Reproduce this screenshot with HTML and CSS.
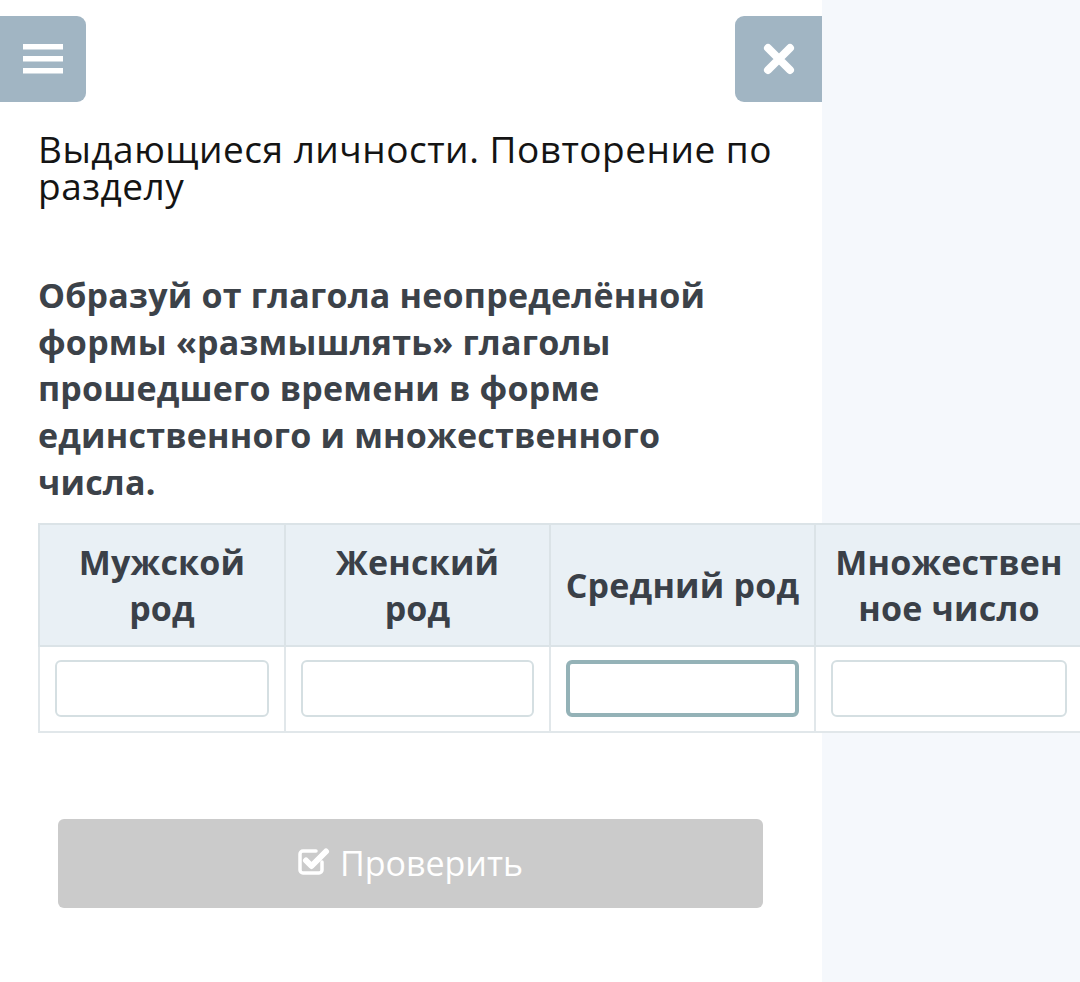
FILE: index.html
```html
<!DOCTYPE html>
<html lang="ru">
<head>
<meta charset="utf-8">
<link rel="stylesheet" href="styles.css">
</head>
<body>
<div class="panel">
  <div class="topbar">
    <div class="btn-menu">
      <svg width="40" height="30" viewBox="0 0 40 30"><rect x="0" y="0" width="40" height="5.5" fill="#fff"/><rect x="0" y="12" width="40" height="5.5" fill="#fff"/><rect x="0" y="24" width="40" height="5.5" fill="#fff"/></svg>
    </div>
    <div class="btn-close">
      <svg width="34" height="34" viewBox="0 0 34 34"><path d="M6 6 L28 28 M28 6 L6 28" stroke="#fff" stroke-width="8" stroke-linecap="round"/></svg>
    </div>
  </div>
  <h1 class="title">Выдающиеся личности. Повторение по разделу</h1>
  <p class="question">Образуй от глагола неопределённой формы «размышлять» глаголы прошедшего времени в форме единственного и множественного числа.</p>
  <table class="grid">
    <tr class="head">
      <th class="c1">Мужской род</th>
      <th class="c2">Женский род</th>
      <th class="c3">Средний род</th>
      <th class="c4">Множественное число</th>
    </tr>
    <tr class="body">
      <td><div class="inp"></div></td>
      <td><div class="inp"></div></td>
      <td><div class="inp focus"></div></td>
      <td><div class="inp"></div></td>
    </tr>
  </table>
  <div class="check-wrap">
    <div class="check-btn">
      <svg class="check-icon" width="32" height="29" viewBox="0 0 32 29"><path d="M24 15 V23 a3 3 0 0 1 -3 3 H5 a3 3 0 0 1 -3 -3 V7 a3 3 0 0 1 3 -3 H18" fill="none" stroke="#fff" stroke-width="3.5" stroke-linecap="round"/><path d="M8 13.5 L13.5 19 L28 4.5" fill="none" stroke="#fff" stroke-width="6" stroke-linecap="round" stroke-linejoin="round"/></svg>
      <span>Проверить</span>
    </div>
  </div>
</div>
</body>
</html>
```
FILE: styles.css
```css
html, body {
  margin: 0;
  padding: 0;
}
body {
  width: 1080px;
  height: 982px;
  background: #f5f8fc;
  font-family: "Open Sans", "Noto Sans", sans-serif;
  overflow: hidden;
}
.panel {
  width: 822px;
  height: 982px;
  background: #ffffff;
  box-sizing: border-box;
  padding-top: 16px;
}
.topbar {
  display: flex;
  justify-content: space-between;
}
.btn-menu {
  width: 86px;
  height: 86px;
  background: #a1b5c3;
  border-radius: 0 9px 9px 0;
  display: flex;
  align-items: center;
  justify-content: center;
}
.btn-close {
  width: 87px;
  height: 86px;
  background: #a1b5c3;
  border-radius: 9px 0 0 9px;
  display: flex;
  align-items: center;
  justify-content: center;
}
.title {
  margin: 28px 0 0 38px;
  font-weight: 400;
  font-size: 37px;
  line-height: 37px;
  letter-spacing: 0.5px;
  color: #141414;
  width: 770px;
}
.question {
  margin: 68px 0 0 38px;
  font-weight: 700;
  font-size: 34px;
  line-height: 46.7px;
  letter-spacing: 0.2px;
  color: #3c4249;
  width: 740px;
}
.grid {
  margin: 17px 0 0 38px;
  border-collapse: collapse;
  width: 1044px;
  table-layout: fixed;
}
.grid th {
  background: #e9f0f5;
  border: 2px solid #dbe3e7;
  font-weight: 700;
  font-size: 34px;
  line-height: 46px;
  letter-spacing: 0.2px;
  color: #3a4048;
  height: 122px;
  padding: 0 16px;
  box-sizing: border-box;
  text-align: center;
  vertical-align: middle;
  overflow-wrap: anywhere;
}
.grid .c1 { width: 246px; }
.grid .c2 { width: 265px; }
.grid .c3 { width: 265px; padding: 0 6px; }
.grid .c4 { width: 268px; }
.grid td {
  border: 2px solid #e1e7ea;
  background: #fff;
  height: 86px;
  padding: 0 15px;
  box-sizing: border-box;
  vertical-align: middle;
}
.inp {
  height: 57px;
  border: 2px solid #d5dfe2;
  border-radius: 6px;
  box-sizing: border-box;
  background: #fff;
}
.inp.focus {
  border: 4px solid #94b2b7;
}
.check-wrap {
  padding: 86px 0 0 58px;
}
.check-btn {
  width: 705px;
  height: 89px;
  background: #cbcbcb;
  border-radius: 6px;
  display: flex;
  align-items: center;
  justify-content: center;
  gap: 10px;
  color: #fff;
  font-size: 34px;
}
.check-icon {
  flex: none;
  width: 32px;
  height: 29px;
  margin-top: -4px;
}
```
